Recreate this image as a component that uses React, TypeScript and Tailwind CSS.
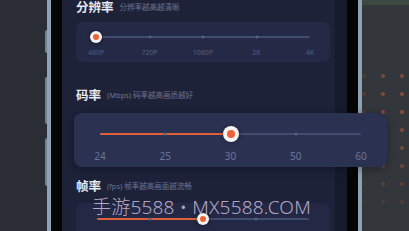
import React from 'react';

const font = { fontFamily: '"Noto Sans", "Noto Sans CJK SC", sans-serif' };

interface SliderProps {
  labels: string[];
  value: number; // index of the selected stop
  filled?: boolean;
  big?: boolean;
}

// track + ticks + thumb, labels laid out under it
const Slider: React.FC<SliderProps> = ({ labels, value, filled, big }) => {
  const pct = (value / (labels.length - 1)) * 100;
  return (
    <div className="flex flex-col">
      <div className={`relative ${big ? 'h-[16px]' : 'h-[12px]'}`}>
        <div className="absolute left-0 right-0 top-1/2 h-[2px] -translate-y-1/2 rounded-full bg-[#434b70]" />
        {filled && (
          <div
            className="absolute left-0 top-1/2 h-[2px] -translate-y-1/2 rounded-full bg-[#e0603a]"
            style={{ width: `${pct}%` }}
          />
        )}
        {labels.map((_, i) =>
          i === 0 || i === labels.length - 1 || i === value ? null : (
            <div
              key={i}
              className="absolute top-1/2 h-[3px] w-[3px] -translate-x-1/2 -translate-y-1/2 rounded-full bg-[#59618a]"
              style={{ left: `${(i / (labels.length - 1)) * 100}%` }}
            />
          )
        )}
        <div
          className={`absolute top-1/2 flex -translate-x-1/2 -translate-y-1/2 items-center justify-center rounded-full bg-[#f4f2f2] shadow-[0_0_4px_rgba(0,0,0,0.4)] ${
            big ? 'h-[16px] w-[16px]' : 'h-[12px] w-[12px]'
          }`}
          style={{ left: `${pct}%` }}
        >
          <div className={`rounded-full bg-[#ef6236] ${big ? 'h-[8px] w-[8px]' : 'h-[6px] w-[6px]'}`} />
        </div>
      </div>
      <div className={`flex justify-between ${big ? '-mx-[20px] mt-[9px]' : '-mx-[20px] mt-[6px]'}`}>
        {labels.map((l) => (
          <span
            key={l}
            className={`w-[40px] text-center leading-none ${
              big ? 'text-[10px] text-[#6c7499]' : 'text-[7px] text-[#545c80]'
            }`}
          >
            {l}
          </span>
        ))}
      </div>
    </div>
  );
};

const Title: React.FC<{ name: string; hint: string }> = ({ name, hint }) => (
  <div className="flex h-[16px] shrink-0 items-center gap-[6px]">
    <span className="text-[12.5px] font-bold leading-none text-[#e6e8ef]">{name}</span>
    <span className="text-[7.5px] leading-none text-[#6d738f]">{hint}</span>
  </div>
);

export default function App() {
  return (
    <div className="relative flex h-[231px] w-[409px] overflow-hidden bg-[#2c3036]" style={font}>
      {/* left table / phone side */}
      <div className="relative w-[47px] shrink-0 bg-[#2b2f35]">
        <div className="absolute right-0 top-[30px] h-[23px] w-[2px] rounded-l-sm bg-[#6f8394]" />
        <div className="absolute right-0 top-[77px] h-[47px] w-[2px] rounded-l-sm bg-[#6f8394]" />
        <div className="absolute right-0 top-[138px] h-[48px] w-[2px] rounded-l-sm bg-[#6f8394]" />
      </div>
      <div className="w-[4px] shrink-0 bg-[#8fa2b3]" />
      <div className="w-[11px] shrink-0 bg-[#050506]" />

      {/* screen */}
      <div className="flex w-[273px] shrink-0 flex-col bg-[#1d2239] pl-[14px]">
        <Title name="分辨率" hint="分辨率越高越清晰" />
        <div className="mt-[6px] h-[40px] w-[254px] shrink-0 rounded-[7px] bg-[#242a45] px-[20px] pt-[9px]">
          <Slider labels={['480P', '720P', '1080P', '2K', '4K']} value={0} />
        </div>

        <div className="mt-[26px] shrink-0">
          <Title name="码率" hint="(Mbps) 码率越高画质越好" />
        </div>
        <div className="relative z-10 -ml-[2px] mt-[9px] h-[54px] w-[313px] shrink-0 rounded-[8px] bg-[#2a3151] px-[26px] pt-[13px] shadow-[0_2px_8px_rgba(0,0,0,0.35)]">
          <Slider labels={['24', '25', '30', '50', '60']} value={2} filled big />
        </div>

        <div className="mt-[12px] shrink-0">
          <Title name="帧率" hint="(fps) 帧率越高画面越流畅" />
        </div>
        <div className="mt-[8px] h-[40px] w-[254px] shrink-0 rounded-[7px] bg-[#232944] px-[21px] pt-[10px]">
          <Slider labels={['24', '30', '60', '90', '120']} value={2} filled />
        </div>
      </div>

      <div className="w-[12px] shrink-0 bg-[#161a2c]" />
      <div className="w-[11px] shrink-0 bg-[#050506]" />
      <div className="w-[4px] shrink-0 bg-[#8fa2b3]" />

      {/* right table with dotted pattern */}
      <div className="flex w-[47px] shrink-0 flex-col bg-[#33363a]">
        <div className="h-[5px] shrink-0 bg-[#3b4940]" />
        <div className="mt-[69px] flex flex-col gap-[14px]">
          {[0.55, 0.6, 0.6, 0.55, 0.5, 0.4, 0.3, 0.2].map((o, r) => (
            <div key={r} className="flex h-[4px] gap-[15px]" style={{ opacity: o }}>
              <div className="h-[4px] w-[4px] rounded-full bg-[#6a3f30]" />
              <div className="h-[4px] w-[4px] rounded-full bg-[#b9593a]" />
              <div className="h-[4px] w-[4px] rounded-full bg-[#c05c3a]" />
            </div>
          ))}
        </div>
      </div>

      {/* watermark */}
      <div className="absolute left-[92px] top-[198px] z-20 whitespace-nowrap text-[19px] font-light leading-none tracking-[0.2px] text-[#c9b8da]/90">
        手游5588 • MX5588.COM
      </div>
    </div>
  );
}
